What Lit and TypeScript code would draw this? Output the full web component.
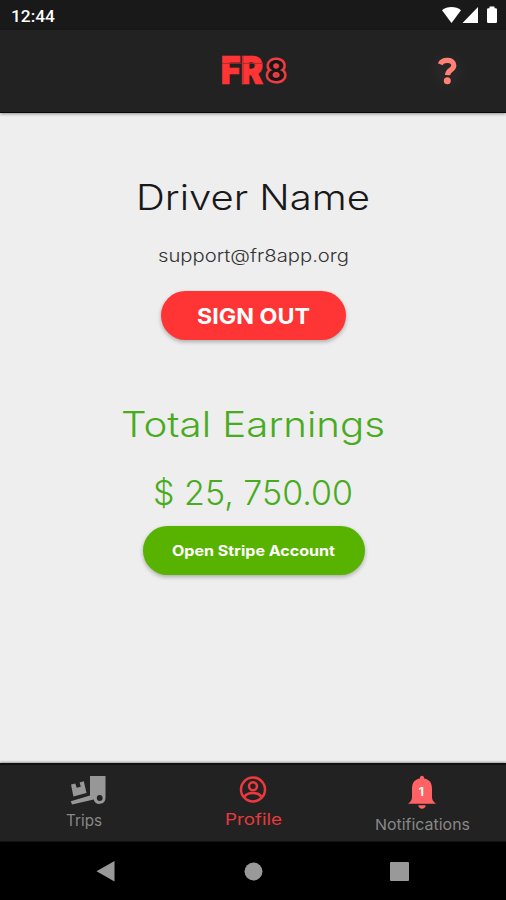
import { LitElement, html, css, svg } from "lit";
import { customElement, property } from "lit/decorators.js";

/** A single line of text set to an exact measure. */
@customElement("fit-text")
class FitText extends LitElement {
  @property() text = "";
  @property({ type: Number }) width = 100;
  @property({ type: Number }) height = 20;
  @property({ type: Number }) base = 15;
  static styles = css`
    :host { display: block; flex: none; }
    svg { display: block; overflow: visible; }
    text { fill: currentColor; }
  `;
  render() {
    return html`<svg width=${this.width} height=${this.height}>
      ${svg`<text x="0" y=${this.base} textLength=${this.width} lengthAdjust="spacingAndGlyphs">${this.text}</text>`}
    </svg>`;
  }
}

@customElement("app-root")
class AppRoot extends LitElement {
  static styles = css`
    * { box-sizing: border-box; }
    :host {
      display: flex; flex-direction: column; width: 506px; height: 900px; overflow: hidden;
      background: #eee; font-family: Inter, "Open Sans", sans-serif;
    }
    svg { display: block; overflow: visible; }
    .status {
      height: 30px; background: #191919; display: flex; justify-content: space-between;
      padding: 7px 8px 0 11px; color: #fff; font: 500 17.3px/19px Roboto, sans-serif; flex: none;
    }
    .bar {
      height: 83px; background: #222; border-bottom: 1px solid #090909; flex: none; z-index: 1;
      display: grid; grid-template-columns: 1fr 70px 1fr; padding-top: 22px;
      box-shadow: 0 1px 3px rgba(0,0,0,.4);
    }
    .logo { grid-column: 2; }
    .fr { font: 900 38px Inter, sans-serif; fill: #ff3434; stroke: #ff3434; stroke-width: .7; }
    .eight { font: 700 29px Inter, sans-serif; fill: #161616; stroke: #ef3d42; stroke-width: 5; paint-order: stroke; stroke-linejoin: round; }
    .help { justify-self: end; width: 42px; height: 42px; border-radius: 50%; background: radial-gradient(circle, #282626 30%, #222 70%); margin: -2px 37px 0 0; display: flex; justify-content: center; padding-top: 8px; }
    main { flex: 1; display: flex; flex-direction: column; align-items: center; }
    .name { margin-top: 61px; color: #191919; font-size: 35px; font-weight: 300; }
    .email { margin-top: 20px; color: #333; font-size: 17.5px; font-weight: 300; }
    .btn {
      border: 0; padding: 0; height: 49px; border-radius: 25px; color: #fff; font-family: inherit;
      display: flex; justify-content: center; align-items: center; box-shadow: 0 2px 4px rgba(0,0,0,.28);
    }
    .out { width: 185px; background: #ff3434; margin-top: 21px; font-size: 22px; font-weight: 700; }
    .earn { margin-top: 61px; color: #48ab20; font-size: 35px; font-weight: 300; }
    .sum { margin-top: 28px; color: #48ab20; font-size: 33.5px; font-weight: 300; }
    .stripe { width: 222px; background: #57b300; margin: 11px 0 0 1px; font-size: 14.2px; font-weight: 700; }
    nav {
      height: 79px; flex: none; background: #222; border-top: 2px solid #111; border-bottom: 1px solid #111;
      display: grid; grid-template-columns: repeat(3, 168.67px); box-shadow: 0 -1px 2px rgba(0,0,0,.35);
    }
    .tab { display: flex; flex-direction: column; align-items: center; padding-top: 10px; color: #888; font-size: 15.5px; font-weight: 400; }
    .tab.active { color: #e83a3e; font-size: 16px; padding-left: 1px; }
    .note { font-size: 15px; padding-left: 1px; }
    .truck { margin-left: 8px; }
    .count { font: 700 12px Inter, sans-serif; fill: #fff; }
    .system { height: 58px; flex: none; background: #000; display: flex; justify-content: space-between; padding: 19px 97px 0 96px; }
  `;
  render() {
    return html`
      <div class="status">
        <span>12:44</span>
        <svg width="58" height="18" fill="#fff">
          <path d="M2 3.3C7-1 16-1 21 3.3L11.5 16Z"/>
          <path d="M38 0V16H22.5Z"/>
          <path d="M49.5-.5h5v1.7h1.3q1.2 0 1.2 1.2v12.3q0 1.3-1.2 1.3h-7.6q-1.2 0-1.2-1.3V2.4q0-1.2 1.2-1.2h1.3z"/>
        </svg>
      </div>
      <header class="bar">
        <svg class="logo" width="70" height="36">
          <text class="fr" x="2.7" y="32.2" textLength="42.5" lengthAdjust="spacingAndGlyphs">FR</text>
          <path d="M4 11.4H44M25 4V33" stroke="#a52b2d" stroke-width=".9"/>
          <text class="eight" x="48.8" y="29.2" textLength="18.4" lengthAdjust="spacingAndGlyphs">8</text>
        </svg>
        <div class="help">
          <svg width="20" height="28" fill="none" stroke="#ff8275" stroke-width="5.2">
            <path d="M2.3 6.2C4.5.8 16 .8 15.8 7.5C15.6 12.5 9.8 11.2 9.6 17.2"/>
            <circle cx="9.3" cy="22.7" r="3.5" fill="#ff8275" stroke="none"/>
          </svg>
        </div>
      </header>
      <main>
        <fit-text class="name" text="Driver Name" width="234" height="45" base="35.5"></fit-text>
        <fit-text class="email" text="support@fr8app.org" width="191" height="31" base="23"></fit-text>
        <button class="btn out"><fit-text text="SIGN OUT" width="113" height="24" base="19.5"></fit-text></button>
        <fit-text class="earn" text="Total Earnings" width="264" height="45" base="36"></fit-text>
        <fit-text class="sum" text="$ 25, 750.00" width="200" height="41" base="31"></fit-text>
        <button class="btn stripe"><fit-text text="Open Stripe Account" width="163" height="20" base="15"></fit-text></button>
      </main>
      <nav>
        <div class="tab">
          <svg class="truck" width="36" height="32">
            <path d="M20 1H35.5V23A6 6 0 0 1 23.7 24.4L2 29.5L.8 26.3L20 20.5Z" fill="#979797"/>
            <path d="M1 9.6L5.3 8.4L6.7 12.8L10.8 11.8L9.6 7.4L13.8 6.3L16.5 18L3.4 21.6Z" fill="#979797"/>
            <circle cx="29.7" cy="23" r="2.9" fill="#222"/>
          </svg>
          <fit-text text="Trips" width="36" height="20" base="19"></fit-text>
        </div>
        <div class="tab active">
          <svg width="28" height="32" fill="none" stroke="#ed383c" stroke-width="2.5">
            <circle cx="14" cy="14.5" r="12"/><circle cx="14" cy="11.3" r="4"/>
            <path d="M5.5 22C8 16.8 20 16.8 22.5 22"/>
          </svg>
          <fit-text text="Profile" width="57" height="20" base="18"></fit-text>
        </div>
        <div class="tab note">
          <svg width="28" height="35">
            <path d="M11.8 3.5C11.8-.1 16.2-.1 16.2 3.5C22.5 4.7 24 9 24 14V22Q24 26 28 28.7H0Q4 26 4 22V14C4 9 5.5 4.7 11.8 3.5ZM10.3 30.3h7.4c0 4.6-7.4 4.6-7.4 0Z" fill="#ff6264"/>
            <text class="count" x="10.8" y="21">1</text>
          </svg>
          <fit-text text="Notifications" width="95" height="20" base="20"></fit-text>
        </div>
      </nav>
      <footer class="system">
        <svg width="20" height="22"><path d="M18.5 0V20.5L.5 10.2Z" fill="#999"/></svg>
        <svg width="20" height="22"><circle cx="10.5" cy="10.5" r="9" fill="#999"/></svg>
        <svg width="20" height="22"><rect x="1" y="1" width="19" height="19" rx="1" fill="#999"/></svg>
      </footer>`;
  }
}
